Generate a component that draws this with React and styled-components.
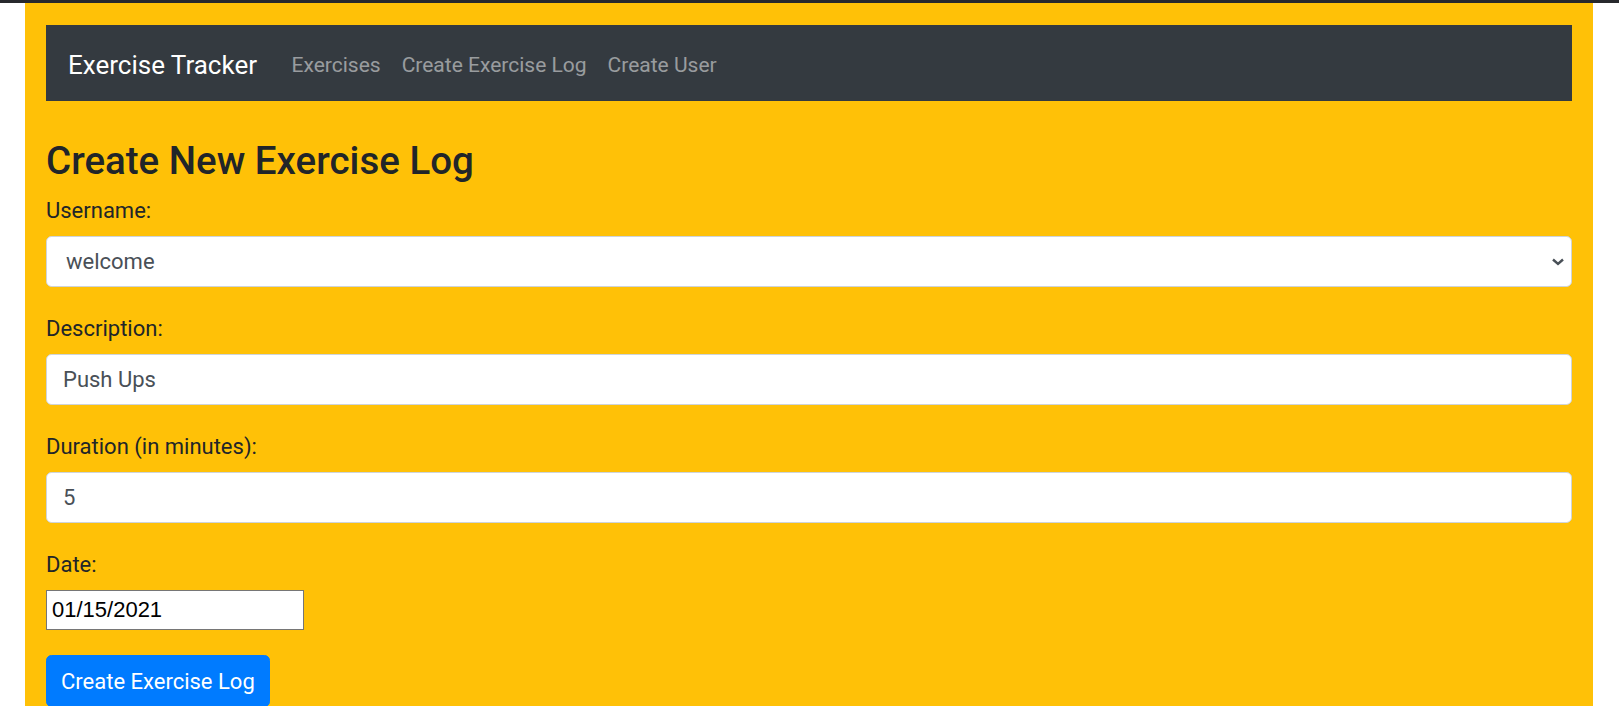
import React, { useState } from "react";
import styled, { createGlobalStyle } from "styled-components";

const GlobalStyle = createGlobalStyle`
  body {
    margin: 0;
    background: #fff;
    font-family: "Segoe UI", Roboto, "Noto Sans", "Liberation Sans", sans-serif;
    color: #212529;
  }
  * { box-sizing: border-box; }
`;

const TopStrip = styled.div`
  height: 3px;
  background: #27292d;
`;

const Page = styled.div`
  margin: 0 26px 0 25px;
  height: 703px;
  overflow: hidden;
  padding: 22px 21px 0;
  background: #ffc107;
`;

const Navbar = styled.nav`
  display: flex;
  align-items: center;
  height: 76px;
  padding: 3px 22px 0;
  background: #343a40;
`;

const Brand = styled.a`
  font-size: 26px;
  color: #fff;
  margin-right: 24px;
  white-space: nowrap;
`;

const NavLink = styled.a`
  font-size: 21px;
  padding: 0 10.5px;
  color: rgba(255, 255, 255, 0.5);
  white-space: nowrap;
  cursor: pointer;
`;

const Heading = styled.h3`
  margin: 37px 0 10px;
  font-size: 38.5px;
  font-weight: 500;
  line-height: 46px;
`;

const Group = styled.div`
  margin-bottom: ${(p) => p.$gap || 25}px;
`;

const Label = styled.label`
  display: block;
  font-size: 22px;
  line-height: 33px;
  margin-bottom: 9px;
`;

const Field = styled.input`
  display: block;
  width: 100%;
  height: 51px;
  padding: 0 16px;
  font: inherit;
  font-size: 22px;
  color: #495057;
  background: #fff;
  border: 1px solid #ced4da;
  border-radius: 5.5px;
  outline: none;
`;

const SelectWrap = styled.div`
  position: relative;
`;

const Select = styled.select`
  display: block;
  width: 100%;
  height: 51px;
  padding: 0 16px 0 19px;
  font: inherit;
  font-size: 22px;
  color: #495057;
  background: #fff;
  border: 1px solid #ced4da;
  border-radius: 5.5px;
  appearance: none;
  outline: none;
`;

const Chevron = styled.svg`
  position: absolute;
  right: 8px;
  top: 22px;
  pointer-events: none;
`;

const DateInput = styled.input`
  width: 258px;
  height: 40px;
  padding: 0 5px;
  font-family: "Liberation Sans", Arial, sans-serif;
  font-size: 22px;
  color: #000;
  background: #fff;
  border: 1px solid #767676;
  border-radius: 0;
  outline: none;
`;

const Submit = styled.button`
  height: 52px;
  padding: 0 14px;
  font: inherit;
  font-size: 22px;
  color: #fff;
  background: #007bff;
  border: 1px solid #007bff;
  border-radius: 5.5px;
  cursor: pointer;
`;

export default function App() {
  const [username, setUsername] = useState("welcome");
  const [description, setDescription] = useState("Push Ups");
  const [duration, setDuration] = useState("5");
  const [date, setDate] = useState("01/15/2021");

  return (
    <>
      <GlobalStyle />
      <TopStrip />
      <Page>
        <Navbar>
          <Brand>Exercise Tracker</Brand>
          <NavLink>Exercises</NavLink>
          <NavLink>Create Exercise Log</NavLink>
          <NavLink>Create User</NavLink>
        </Navbar>

        <Heading>Create New Exercise Log</Heading>
        <form onSubmit={(e) => e.preventDefault()}>
          <Group>
            <Label>Username: </Label>
            <SelectWrap>
              <Select value={username} onChange={(e) => setUsername(e.target.value)}>
                <option value="welcome">welcome</option>
              </Select>
              <Chevron width="12" height="8" viewBox="0 0 12 8">
                <path d="M1 1.5 L6 6 L11 1.5" fill="none" stroke="#495057" strokeWidth="2.4" />
              </Chevron>
            </SelectWrap>
          </Group>
          <Group>
            <Label>Description: </Label>
            <Field type="text" value={description} onChange={(e) => setDescription(e.target.value)} />
          </Group>
          <Group>
            <Label>Duration (in minutes): </Label>
            <Field type="text" value={duration} onChange={(e) => setDuration(e.target.value)} />
          </Group>
          <Group $gap={25}>
            <Label>Date: </Label>
            <div>
              <DateInput type="text" value={date} onChange={(e) => setDate(e.target.value)} />
            </div>
          </Group>
          <Submit type="submit">Create Exercise Log</Submit>
        </form>
      </Page>
    </>
  );
}
